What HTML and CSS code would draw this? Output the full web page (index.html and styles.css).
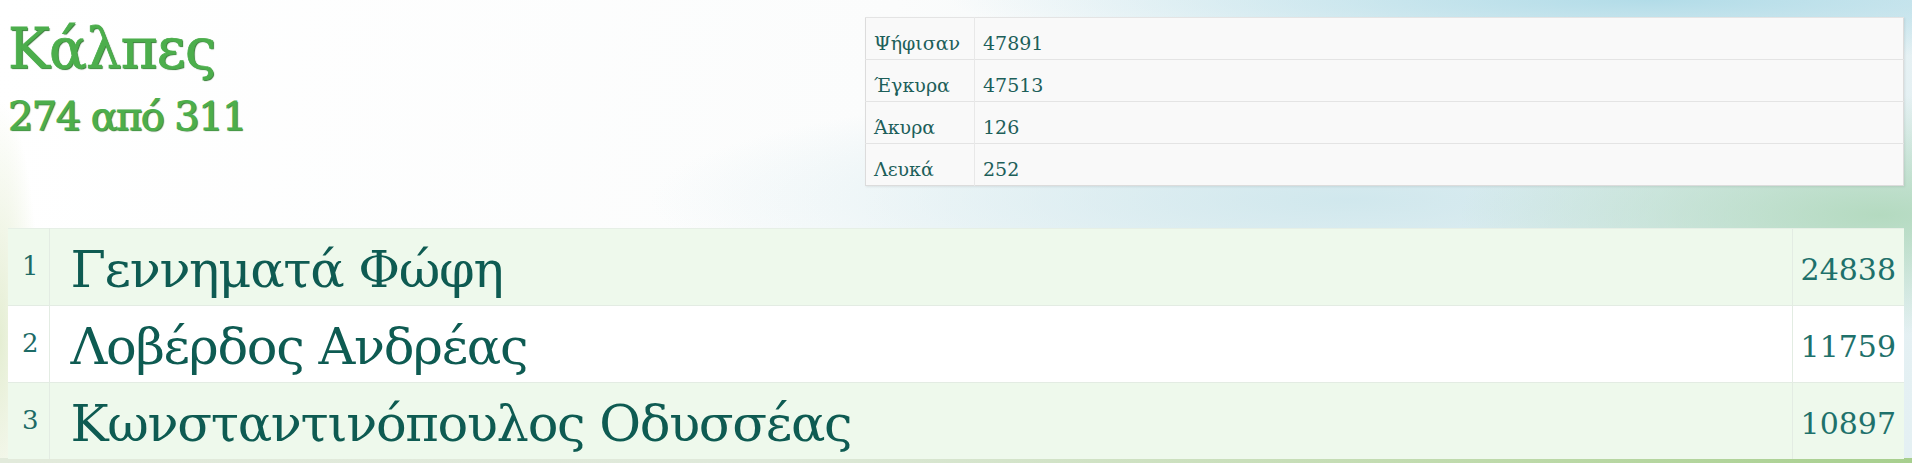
FILE: index.html
```html
<!DOCTYPE html>
<html lang="el">
<head>
<meta charset="utf-8">
<title>Κάλπες</title>
<link rel="stylesheet" href="styles.css">
</head>
<body>
<div class="page">
  <header class="top">
    <div class="title">
      <h1 class="title-main">Κάλπες</h1>
      <h2 class="title-sub">274 από 311</h2>
    </div>
    <table class="stats">
      <tbody>
        <tr><td class="stats-label">Ψήφισαν</td><td class="stats-value">47891</td></tr>
        <tr><td class="stats-label">Έγκυρα</td><td class="stats-value">47513</td></tr>
        <tr><td class="stats-label">Άκυρα</td><td class="stats-value">126</td></tr>
        <tr><td class="stats-label">Λευκά</td><td class="stats-value">252</td></tr>
      </tbody>
    </table>
  </header>
  <table class="results">
    <tbody>
      <tr class="row-alt"><td class="rank">1</td><td class="name">Γεννηματά Φώφη</td><td class="votes">24838</td></tr>
      <tr><td class="rank">2</td><td class="name">Λοβέρδος Ανδρέας</td><td class="votes">11759</td></tr>
      <tr class="row-alt"><td class="rank">3</td><td class="name">Κωνσταντινόπουλος Οδυσσέας</td><td class="votes">10897</td></tr>
    </tbody>
  </table>
</div>
</body>
</html>
```
FILE: styles.css
```css
html, body {
  margin: 0;
  padding: 0;
}
body {
  width: 1912px;
  height: 463px;
  overflow: hidden;
  font-family: "DejaVu Serif", "Liberation Serif", serif;
  background:
    linear-gradient(to right, #e2eadb 0%, #dfe9da 40%, #bcd9a8 80%, #a7cf8e 100%) bottom / 100% 5px no-repeat,
    radial-gradient(ellipse 700px 60px at 1650px 0px, rgba(178, 220, 232, 1), rgba(178, 220, 232, 0) 100%),
    radial-gradient(ellipse 420px 120px at 1880px 215px, rgba(180, 218, 192, 1), rgba(180, 218, 192, 0) 100%),
    radial-gradient(ellipse 700px 120px at 1350px 200px, rgba(205, 230, 236, 0.9), rgba(205, 230, 236, 0) 100%),
    radial-gradient(ellipse 40px 240px at 0px 340px, rgba(226, 236, 206, 0.9), rgba(226, 236, 206, 0) 100%),
    linear-gradient(100deg, #ffffff 0%, #fbfcfc 45%, #eef5f6 70%, #e4f0f3 100%);
}
.page {
  display: flex;
  flex-direction: column;
  padding: 0 8px;
}
.top {
  display: flex;
  justify-content: space-between;
  align-items: flex-start;
  padding-top: 17px;
  height: 228px;
  box-sizing: border-box;
}
.title {
  display: flex;
  flex-direction: column;
}
.title-main {
  margin: 2px 0 0 0;
  font-size: 56px;
  line-height: 60px;
  font-weight: normal;
  color: #4cae4c;
  -webkit-text-stroke: 0.8px #4cae4c;
  text-shadow: 1px 1px 1px #2f6f2f;
  letter-spacing: -0.8px;
}
.title-sub {
  margin: 15px 0 0 0;
  font-size: 40px;
  line-height: 44px;
  font-weight: normal;
  color: #4cae4c;
  -webkit-text-stroke: 0.9px #4cae4c;
  text-shadow: 1px 1px 1px #2f6f2f;
  letter-spacing: -1.6px;
}
.stats {
  width: 1039px;
  border-collapse: collapse;
  background: #f9f9f9;
  border: 1px solid #dcdcdc;
  border-top-color: #c4c8cc;
  box-shadow: 1px 1px 2px rgba(0, 0, 0, 0.08);
  font-size: 19px;
  color: #1d5f5a;
}
.stats td {
  padding: 13px 8px 3px 8px;
  line-height: 25px;
  border-top: 1px solid #e4e4e4;
}
.stats-label {
  width: 109px;
  box-sizing: border-box;
  white-space: nowrap;
  border-right: 1px solid #e8e8e8;
}
.results {
  width: 100%;
  border-collapse: collapse;
  background: #ffffff;
}
.results td {
  border-top: 1px solid #e3ece3;
  vertical-align: middle;
}
.results tr:first-child td {
  border-top: 1px solid #e6efe6;
}
.row-alt {
  background: #eef9ec;
}
.rank {
  width: 41px;
  box-sizing: border-box;
  text-align: center;
  font-size: 26px;
  color: #1d6b66;
  border-right: 1px solid #e3ece3;
  padding: 0 0 2px 4px;
}
.name {
  padding: 11px 8px 5px 21px;
  font-size: 51px;
  line-height: 60px;
  color: #0e5b52;
  letter-spacing: -1.3px;
}
.votes {
  width: 112px;
  box-sizing: border-box;
  text-align: right;
  padding: 4px 8px 0 8px;
  font-size: 30px;
  color: #1e716b;
  border-left: 1px solid #e3ece3;
}
```
